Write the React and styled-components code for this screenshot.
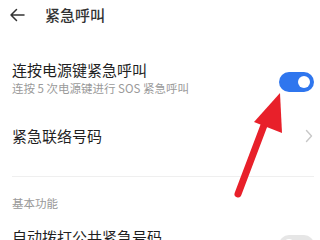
import React from "react";
import styled, { createGlobalStyle } from "styled-components";

const Global = createGlobalStyle`
  html, body { margin: 0; padding: 0; background: #ffffff; }
  body { font-family: "Noto Sans CJK SC", "Noto Sans", sans-serif; overflow: hidden; }
`;

const Page = styled.div`
  position: relative;
  width: 320px;
  height: 240px;
  overflow: hidden;
  background: #fff;
`;

const Header = styled.div`
  height: 30px;
  display: flex;
  align-items: center;
  padding-left: 9px;
  gap: 20px;
`;

const Title = styled.div`
  font-size: 15px;
  font-weight: 500;
  color: #333;
  line-height: 20px;
`;

const List = styled.div`
  padding: 0 6px 0 12px;
  display: flex;
  flex-direction: column;
`;

const Row = styled.div`
  display: flex;
  align-items: ${(p) => p.$align || "center"};
  justify-content: space-between;
  margin-top: ${(p) => p.$mt || 0}px;
`;

const TextBlock = styled.div`
  display: flex;
  flex-direction: column;
`;

const RowTitle = styled.div`
  font-size: 15px;
  line-height: 20px;
  color: #1f1f1f;
`;

const RowSub = styled.div`
  font-size: 11.5px;
  line-height: 14px;
  color: #9a9a9a;
  margin-top: 1px;
`;

const Switch = styled.div`
  width: 35px;
  height: 20px;
  border-radius: 10px;
  background: ${(p) => (p.$on ? "#2f76ee" : "#e6e6e6")};
  position: relative;
  margin-top: ${(p) => p.$mt || 0}px;
  flex-shrink: 0;
  &::after {
    content: "";
    position: absolute;
    top: 4px;
    ${(p) => (p.$on ? "right: 4px;" : "left: 4px;")}
    width: 12px;
    height: 12px;
    border-radius: 50%;
    background: #fff;
  }
`;

const Divider = styled.div`
  height: 1px;
  background: #efefef;
  margin-top: ${(p) => p.$mt || 0}px;
`;

const SectionLabel = styled.div`
  font-size: 11.5px;
  line-height: 16px;
  color: #999;
  margin-top: ${(p) => p.$mt || 0}px;
`;

const Overlay = styled.svg`
  position: absolute;
  left: 0;
  top: 0;
  pointer-events: none;
`;

function BackArrow() {
  return (
    <svg width="16" height="14" viewBox="0 0 16 14">
      <path d="M15 7H2M7.5 1.5L2 7l5.5 5.5" fill="none" stroke="#333" strokeWidth="1.5" strokeLinecap="round" strokeLinejoin="round" />
    </svg>
  );
}

function Chevron() {
  return (
    <svg width="10" height="14" viewBox="0 0 10 14">
      <path d="M2.5 1.5L7.5 7l-5 5.5" fill="none" stroke="#c8c8c8" strokeWidth="1.4" strokeLinecap="round" strokeLinejoin="round" />
    </svg>
  );
}

export default function App() {
  return (
    <Page>
      <Global />
      <Header>
        <BackArrow />
        <Title>紧急呼叫</Title>
      </Header>
      <List>
        <Row $mt={30} $align="flex-start">
          <TextBlock>
            <RowTitle>连按电源键紧急呼叫</RowTitle>
            <RowSub>连按 5 次电源键进行 SOS 紧急呼叫</RowSub>
          </TextBlock>
          <Switch $on $mt={12} />
        </Row>
        <Row $mt={31}>
          <RowTitle>紧急联络号码</RowTitle>
          <Chevron />
        </Row>
        <Divider $mt={30} />
        <SectionLabel $mt={18}>基本功能</SectionLabel>
        <Row $mt={16} $align="flex-start">
          <RowTitle>自动拨打公共紧急号码</RowTitle>
          <Switch $mt={8} />
        </Row>
      </List>
      <Overlay width="320" height="240" viewBox="0 0 320 240">
        <line x1="238" y1="194" x2="266" y2="120" stroke="#e8202a" strokeWidth="7" strokeLinecap="round" />
        <polygon points="280,93 254,122 282,133" fill="#e8202a" />
      </Overlay>
    </Page>
  );
}
